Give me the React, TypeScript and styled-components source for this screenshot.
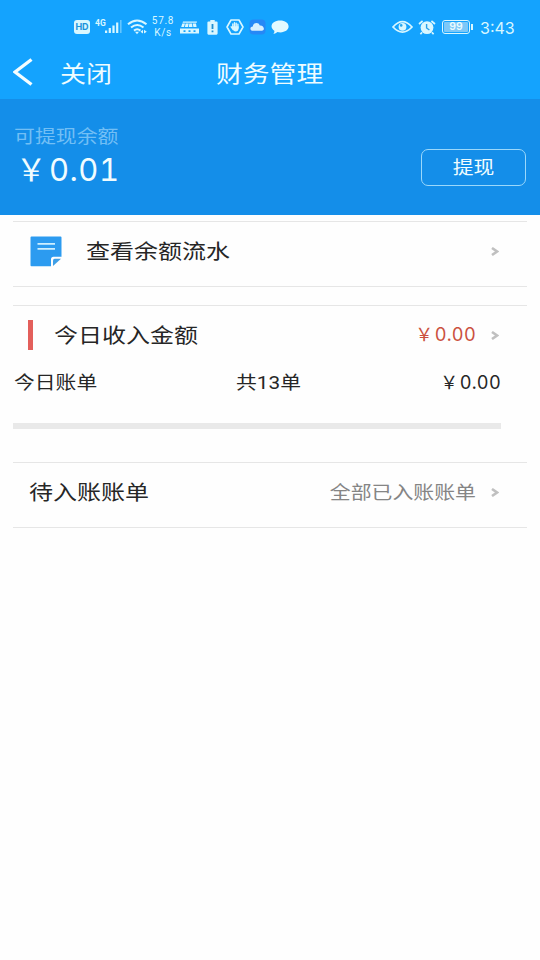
import React from "react";
import styled, { createGlobalStyle } from "styled-components";

const App = () => {
  return (
    <Page>
      <GlobalStyle />
      <Header>
        <StatusBar />
        <NavBar>
          <BackIcon width="20" height="28" viewBox="0 0 20 28" fill="none">
            <path d="M18.5 1.5L2 14L18.5 26.5" stroke="#f4fdff" strokeWidth="3.4" />
          </BackIcon>
          <NavText>
            <Text $size={26}>关闭</Text>
          </NavText>
          <NavTitle>
            <Text $size={26.8}>财务管理</Text>
          </NavTitle>
        </NavBar>
      </Header>
      <Balance>
        <div>
          <BalanceLabel>
            <Text $size={20.9}>可提现余额</Text>
          </BalanceLabel>
          <BalanceAmount>
            <Money value="0.01" size={31} />
          </BalanceAmount>
        </div>
        <WithdrawButton>
          <Text $size={20.8}>提现</Text>
        </WithdrawButton>
      </Balance>

      <FlowCard>
        <Row>
          <NoteIcon />
          <RowTitle $gap={24}>
            <Text $size={24}>查看余额流水</Text>
          </RowTitle>
          <Arrow />
        </Row>
      </FlowCard>

      <IncomeCard>
        <IncomeRow>
          <RedMark />
          <RowTitle $gap={21}>
            <Text $size={24}>今日收入金额</Text>
          </RowTitle>
          <Amount>
            <Money value="0.00" size={18.2} />
          </Amount>
          <Arrow />
        </IncomeRow>
        <BillRow>
          <Text $size={20.8}>今日账单</Text>
          <Text $size={20.8}>共13单</Text>
          <Money value="0.00" size={18.2} />
        </BillRow>
        <ProgressTrack />
      </IncomeCard>

      <PendingCard>
        <Row>
          <RowTitle $gap={0}>
            <Text $size={24}>待入账账单</Text>
          </RowTitle>
          <PendingNote>
            <Text $size={20.9}>全部已入账账单</Text>
          </PendingNote>
          <Arrow />
        </Row>
      </PendingCard>
    </Page>
  );
};

export default App;

const StatusBar = () => (
  <StatusContainer>
    <StatusGroup>
      <HdBadge>HD</HdBadge>
      <NetworkType>4G</NetworkType>
      <StatusIcon $gap={0} width="17" height="14" viewBox="0 0 17 14" fill="#d9f7ff">
        <rect x="0" y="10.5" width="2.2" height="2.5" />
        <rect x="3.7" y="8" width="2.2" height="5" />
        <rect x="7.4" y="5.5" width="2.2" height="7.5" />
        <rect x="11.1" y="2.5" width="2.2" height="10.5" />
        <rect x="15" y="0" width="1.6" height="13" opacity="0.4" />
      </StatusIcon>
      <StatusIcon $gap={5} width="21" height="16" viewBox="0 0 21 16" fill="none" stroke="#d9f7ff" strokeWidth="2">
        <path d="M1 5.3Q10 -2.4 19.5 5.3" />
        <path d="M4 8.6Q10.2 3.4 16.5 8.6" />
        <path d="M7 11.6Q10.2 9 13.4 11.6" />
        <path d="M8 12.8H12L10 15.2Z" fill="#d9f7ff" stroke="none" />
        <path d="M16 10.8L13.4 12.7L16 14.6ZM17 10.8L19.8 12.7L17 14.6Z" fill="#d9f7ff" stroke="none" />
      </StatusIcon>
      <Speed>
        <span>57.8</span>
        <span>K/s</span>
      </Speed>
      <StatusIcon $gap={5} width="19" height="13" viewBox="0 0 19 13" fill="#d9f7ff">
        <path d="M3 0.5H17L16.7 1.8H2.6ZM2.3 2.4H5L4 6H1.2ZM5.6 2.6H8.7L8 6H4.9ZM9.3 2.6H12L12.5 6H8.8ZM12.7 2.6H16L16.6 6H13.4Z" />
        <path d="M0 7.5H19V12.5H0ZM3.5 9.2V11H5.5V9.2ZM8.5 9.2V11H10.5V9.2ZM13.5 9.2V11H15.5V9.2Z" fillRule="evenodd" />
      </StatusIcon>
      <StatusIcon $gap={8} width="11" height="15" viewBox="0 0 11 15" fill="#d9f7ff">
        <path d="M3.3 0H7.7V1.5H9.5Q10.6 1.5 10.6 2.6V13.6Q10.6 14.7 9.5 14.7H1.5Q0.4 14.7 0.4 13.6V2.6Q0.4 1.5 1.5 1.5H3.3Z" />
        <path d="M5.5 4V9M5.5 10.5V12.2" stroke="#218fd0" strokeWidth="1.8" />
      </StatusIcon>
      <StatusIcon $gap={8} width="18" height="16" viewBox="0 0 18 16" fill="none">
        <path d="M5 1H13L17 8L13 15H5L1 8Z" stroke="#d9f7ff" strokeWidth="1.6" strokeLinejoin="round" />
        <path
          d="M6.8 9V5M8.5 8V3.8M10.2 8V4.2M11.9 9V5.2M5.2 7.8L7.2 10.5"
          stroke="#d9f7ff"
          strokeWidth="1.4"
          strokeLinecap="round"
        />
        <path d="M6.2 7.2H12.6V9.5Q12.4 12.5 9.6 12.6Q7.6 12.5 6.2 9.5Z" fill="#d9f7ff" />
      </StatusIcon>
      <StatusIcon $gap={5} width="17" height="16" viewBox="0 0 17 16">
        <rect x="0.5" y="0.5" width="16" height="15" rx="4" fill="#2688f6" />
        <path
          d="M4.3 11.8C0.4 11.8 0.6 7.6 3.8 7.6C4.2 3.3 9.8 2.8 10.8 6.5C14.8 6 16.6 11.4 12.8 11.8Z"
          fill="#d9f0ff"
        />
      </StatusIcon>
      <StatusIcon $gap={5} width="18" height="15" viewBox="0 0 18 15" fill="#e3faff">
        <path d="M9.2 0.6C14 0.6 17.6 3.1 17.6 6.6C17.6 10 14 12.4 9.4 12.4Q7.8 12.4 6.5 12Q4.8 13.7 2.4 13.9Q3.6 12.4 3.3 10.8C-2.4 6.8 1.3 0.6 9.2 0.6Z" />
      </StatusIcon>
    </StatusGroup>
    <StatusGroup>
      <StatusIcon $gap={0} width="21" height="14" viewBox="0 0 21 14" fill="none">
        <path d="M1 7Q10.5 -3.8 20 7Q10.5 17.2 1 7Z" stroke="#d9f7ff" strokeWidth="1.7" />
        <circle cx="10.5" cy="6.8" r="3.9" fill="#d9f7ff" />
        <circle cx="9.2" cy="5.4" r="1.3" fill="#28a6ee" />
      </StatusIcon>
      <StatusIcon $gap={5.5} width="18" height="15" viewBox="0 0 18 15" fill="none">
        <circle cx="9" cy="7.6" r="6.4" fill="#d9f7ff" />
        <path d="M1 4L4.6 1M17 4L13.4 1M4 12.4L2.4 14.2M14 12.4L15.6 14.2" stroke="#d9f7ff" strokeWidth="1.7" />
        <path d="M8.6 4V8L11.4 10" stroke="#28a0ea" strokeWidth="1.4" />
      </StatusIcon>
      <Battery>
        <BatteryLevel>99</BatteryLevel>
      </Battery>
      <BatteryTip />
      <Clock>3:43</Clock>
    </StatusGroup>
  </StatusContainer>
);

const Money = ({ value, size }: { value: string; size: number }) => (
  <MoneyContainer $size={size}>
    <Yen>￥</Yen>
    <span>{value}</span>
  </MoneyContainer>
);

const NoteIcon = () => (
  <NoteSvg width="32" height="31" viewBox="0 0 32 31">
    <path
      d="M1.5 0.5H30.5Q31.5 0.5 31.5 1.5V20.8H23.5Q21 20.8 21 23.3V30.3H1.5Q0.5 30.3 0.5 29.3V1.5Q0.5 0.5 1.5 0.5Z"
      fill="#2c9bf0"
    />
    <path d="M7.5 7.8H25M7.5 12.8H25" stroke="#cdefff" strokeWidth="1.7" />
    <path d="M23 30V24.5Q23 22.8 24.7 22.8H31Z" fill="#3f9fe6" />
  </NoteSvg>
);

const Arrow = () => (
  <ArrowSvg width="8" height="9" viewBox="0 0 8 9" fill="none">
    <path d="M1 1L6 4.5L1 8" stroke="#c0c0c0" strokeWidth="2.6" />
  </ArrowSvg>
);

const GlobalStyle = createGlobalStyle`
  * {
    box-sizing: border-box;
  }
  body {
    margin: 0;
    background: #fefefe;
  }
`;

const Page = styled.div`
  width: 540px;
  height: 960px;
  overflow: hidden;
  background: #fefefe;
  color: #262626;
  font-family: Roboto, "Noto Sans CJK SC", sans-serif;
`;

// Glyphs are slightly flattened, so the width stays at the font size
const Text = styled.span<{ $size: number }>`
  display: block;
  padding-top: 1px;
  font-size: ${({ $size }) => $size}px;
  line-height: 1;
  white-space: nowrap;
  transform: scaleY(0.86);
`;

const MoneyContainer = styled.div<{ $size: number }>`
  display: flex;
  align-items: baseline;
  gap: 0.07em;
  font-family: Inter, "Noto Sans CJK SC", sans-serif;
  font-size: ${({ $size }) => $size}px;
  font-variant-numeric: tabular-nums;
  letter-spacing: 0.015em;
  line-height: 1;
  white-space: nowrap;
`;

const Yen = styled.span`
  font-family: "Noto Sans CJK SC", sans-serif;
  font-size: 0.98em;
  line-height: 1;
`;

const Header = styled.header`
  height: 99px;
  background: #14a3fe;
  color: #effcff;
`;

const StatusContainer = styled.div`
  display: flex;
  justify-content: space-between;
  height: 46px;
  padding: 8px 25px 0 74px;
  color: #d9f7ff;
`;

const StatusGroup = styled.div`
  display: flex;
  align-items: center;
  height: 38px;
`;

const StatusIcon = styled.svg<{ $gap: number }>`
  flex-shrink: 0;
  margin-left: ${({ $gap }) => $gap}px;
`;

const HdBadge = styled.div`
  width: 16px;
  height: 14px;
  border-radius: 3px;
  background: #d9f7ff;
  color: #1c93dc;
  font-family: Inter, sans-serif;
  font-size: 9px;
  font-weight: 700;
  line-height: 14px;
  text-align: center;
`;

const NetworkType = styled.div`
  width: 10px;
  margin: 0 0 8px 5px;
  font-size: 8.5px;
  font-weight: 700;
  line-height: 8px;
`;

const Speed = styled.div`
  display: flex;
  flex-direction: column;
  align-items: center;
  width: 24px;
  margin-left: 3px;
  font-size: 10px;
  letter-spacing: 0.7px;
  line-height: 12px;
`;

const Battery = styled.div`
  width: 28px;
  height: 14px;
  margin-left: 6px;
  padding: 1px;
  border: 1.5px solid #d9f7ff;
  border-radius: 3px;
`;

const BatteryLevel = styled.div`
  height: 10px;
  border-radius: 1px;
  background: #7cc8f8;
  color: #eafcff;
  font-family: Inter, sans-serif;
  font-size: 10.5px;
  font-weight: 600;
  line-height: 10px;
  text-align: center;
`;

const BatteryTip = styled.div`
  width: 2px;
  height: 6px;
  margin-left: 1px;
  background: #d9f7ff;
`;

const Clock = styled.div`
  width: 35px;
  margin-left: 7px;
  padding-top: 1px;
  font-family: Inter, sans-serif;
  font-size: 16px;
  line-height: 16px;
  white-space: nowrap;
`;

const NavBar = styled.div`
  display: grid;
  grid-template-columns: 60px 156px 1fr;
  align-items: center;
  height: 53px;
`;

const BackIcon = styled.svg`
  margin: 0 0 2px 13px;
`;

const NavText = styled.div`
  padding-top: 1px;
`;

const NavTitle = styled(NavText)`
  padding-top: 2px;
`;

const Balance = styled.section`
  display: flex;
  justify-content: space-between;
  height: 116px;
  padding: 27px 14px 0;
  background: #148ee9;
  color: #f0fcff;
`;

const BalanceLabel = styled.div`
  color: #72bff5;
`;

const BalanceAmount = styled.div`
  margin: 5px 0 0 2px;
`;

const WithdrawButton = styled.button`
  display: flex;
  align-items: center;
  justify-content: center;
  width: 105px;
  height: 37px;
  margin: 23px 0 0;
  padding: 0;
  border: 1.5px solid #9bd8fb;
  border-radius: 7px;
  background: transparent;
  color: #f0fcff;
  font-family: inherit;
`;

const Card = styled.section`
  margin: 0 13px;
  border-top: 1px solid #e6e6e6;
  border-bottom: 1px solid #e6e6e6;
`;

const FlowCard = styled(Card)`
  height: 66px;
  margin-top: 6px;
  padding-left: 17px;
`;

const IncomeCard = styled(Card)`
  height: 158px;
  margin-top: 18px;
`;

const PendingCard = styled(Card)`
  height: 65px;
  padding-left: 16px;
  border-top: none;
`;

const Row = styled.div`
  display: flex;
  align-items: center;
  height: 58px;
  padding-right: 28px;
`;

const IncomeRow = styled(Row)`
  padding-left: 15px;
`;

const RowTitle = styled.div<{ $gap: number }>`
  flex: 1;
  margin-left: ${({ $gap }) => $gap}px;
`;

const NoteSvg = styled.svg`
  flex-shrink: 0;
`;

const ArrowSvg = styled.svg`
  flex-shrink: 0;
  margin-left: 15px;
`;

const RedMark = styled.div`
  width: 5px;
  height: 30px;
  background: #e35f5b;
`;

const Amount = styled.div`
  padding-bottom: 1px;
  color: #cb513f;
`;

const BillRow = styled.div`
  display: grid;
  grid-template-columns: 222px 1fr auto;
  align-items: center;
  height: 37px;
  padding: 0 26px 0 1px;
`;

const PendingNote = styled.div`
  padding-top: 1px;
  color: #858585;
`;

const ProgressTrack = styled.div`
  width: 488px;
  height: 6px;
  margin-top: 22px;
  background: #e9e9e9;
`;
